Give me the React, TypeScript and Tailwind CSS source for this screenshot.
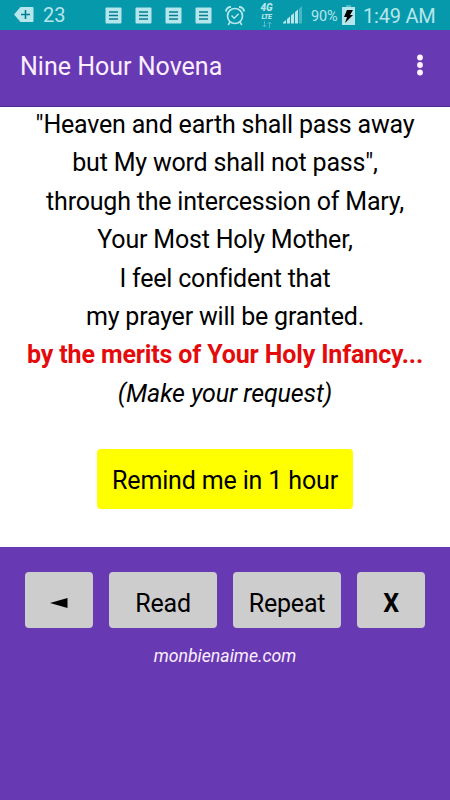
import React from 'react';

const VERSES = [
  '"Heaven and earth shall pass away',
  'but My word shall not pass",',
  'through the intercession of Mary,',
  'Your Most Holy Mother,',
  'I feel confident that',
  'my prayer will be granted.',
];

const NoteIcon: React.FC = () => (
  <svg width="17" height="17" viewBox="0 0 17 17" className="shrink-0">
    <rect x="0.5" y="0.5" width="16" height="16" rx="1" fill="#b5e6ec" />
    <path d="M4 5h9M4 8.5h9M4 12h9" stroke="#067d8e" strokeWidth="1.3" />
  </svg>
);

const StatusBar: React.FC = () => (
  <div className="flex h-[30px] items-center bg-[#0698ab] pl-[14px] text-[#b5e6ec]">
    <svg width="20" height="16" viewBox="0 0 20 16" className="shrink-0">
      <path d="M6.5 0H18.500a1 1 0 0 1 1 1V14a1 1 0 0 1-1 1H6.500L0 7.500z" fill="#b5e6ec" />
      <path d="M7 7.500h9M11.500 3v9" stroke="#067d8e" strokeWidth="1.600" />
    </svg>
    <span className="ml-[9px] w-[62px] pt-px text-[20px] leading-[29px]">23</span>
    <div className="flex w-[120px] gap-[13px]">
      <NoteIcon />
      <NoteIcon />
      <NoteIcon />
      <NoteIcon />
    </div>
    <svg width="20" height="21" viewBox="0 0 20 21" className="shrink-0" fill="none" stroke="#b5e6ec">
      <circle cx="10" cy="11" r="7.500" strokeWidth="1.700" />
      <path d="M6.500 10.500l2.700 2.800 4.500-4.500" strokeWidth="1.500" />
      <path d="M1 6.500A4.500 4.500 0 0 1 6 2M19 6.500A4.500 4.500 0 0 0 14 2" strokeWidth="2" />
      <path d="M5 17l-1.800 3M15 17l1.800 3" strokeWidth="1.600" />
    </svg>
    <div className="ml-[14px] flex w-[15px] flex-col items-center">
      <span className="text-[10px] leading-[12px] font-black italic">4G</span>
      <span className="-mt-[1px] text-[7px] leading-[8px] font-black tracking-[-0.3px] italic">LTE</span>
      <svg width="10" height="7" viewBox="0 0 10 7" fill="none" stroke="#50bccb">
        <path d="M2.500 0v6M0.500 4l2 2 2-2M7.500 7V1M5.500 3l2-2 2 2" />
      </svg>
    </div>
    <svg width="20" height="18" viewBox="0 0 20 18" className="ml-[9px] shrink-0">
      <path d="M0 17.500V16.500L3 14V17.500zM4 17.500V13L7 10.500V17.500zM8 17.500V9.500L11 7V17.500zM12 17.500V6L15 3.500V17.500z" fill="#b5e6ec" />
      <path d="M16 17.500V3L19 0V17.500z" fill="#4bb6c3" />
    </svg>
    <span className="ml-[8px] w-[31px] pt-[3px] text-[14.5px] leading-[27px] tracking-[-0.2px]">90%</span>
    <svg width="13" height="20" viewBox="0 0 13 20" className="shrink-0">
      <path d="M4 0h5v2H4z" fill="#50bccb" />
      <rect y="2" width="13" height="18" fill="#b5e6ec" />
      <path d="M5 5h6L8 10h3L3 18l2-6H2z" fill="#000" />
    </svg>
    <span className="ml-[8px] pt-[2px] text-[20px] leading-[28px] tracking-[-0.2px] whitespace-nowrap">1:49 AM</span>
  </div>
);

const App: React.FC = () => {
  return (
    <div className="flex h-[800px] w-[450px] flex-col overflow-hidden bg-[#673ab4] font-[Roboto,sans-serif]">
      <StatusBar />

      <header className="flex h-[77px] items-center justify-between border-b border-[#512d91] bg-[#673ab4] pr-[26px] pl-[20px]">
        <h1 className="pb-[2px] text-[25px] text-[#fdeeff]">Nine Hour Novena</h1>
        <svg width="8" height="22" viewBox="0 0 8 22" className="mb-[6px]" fill="#fff4ff">
          <circle cx="4" cy="3.500" r="2.900" />
          <circle cx="4" cy="11" r="2.900" />
          <circle cx="4" cy="18.500" r="2.900" />
        </svg>
      </header>

      <main className="flex h-[440px] flex-col items-center bg-white text-center text-[25px] leading-[38.4px] tracking-[-0.2px] text-black">
        <div className="-mt-px whitespace-nowrap">
          {VERSES.map((line) => (
            <p key={line}>{line}</p>
          ))}
          <p className="font-bold tracking-[-0.14px] text-[#e30b0b]">by the merits of Your Holy Infancy...</p>
          <p className="tracking-[-0.1px] italic">(Make your request)</p>
        </div>
        <button className="mt-[36px] h-[60px] w-[256px] rounded-[4px] bg-[#ffff00] pt-[4px] tracking-[-0.15px] whitespace-nowrap">
          Remind me in 1 hour
        </button>
      </main>

      <footer className="flex flex-col items-center pt-[25px]">
        <div className="flex gap-[16px] text-[25px] tracking-[-0.2px] text-black">
          <button className="flex h-[56px] w-[68px] items-center justify-center rounded-[4px] bg-[#cdcdcd] pt-[5px]">
            <svg width="18" height="10" viewBox="0 0 18 10">
              <path d="M0 5L17.500 0V10z" fill="#000" />
            </svg>
          </button>
          <button className="h-[56px] w-[108px] rounded-[4px] bg-[#cdcdcd] pt-[7px]">Read</button>
          <button className="h-[56px] w-[108px] rounded-[4px] bg-[#cdcdcd] pt-[7px]">Repeat</button>
          <button className="h-[56px] w-[68px] rounded-[4px] bg-[#cdcdcd] pt-[7px] font-bold">X</button>
        </div>
        <p className="mt-[15px] text-[17.7px] leading-[26px] text-[#fdeeff] italic">monbienaime.com</p>
      </footer>
    </div>
  );
};

export default App;
